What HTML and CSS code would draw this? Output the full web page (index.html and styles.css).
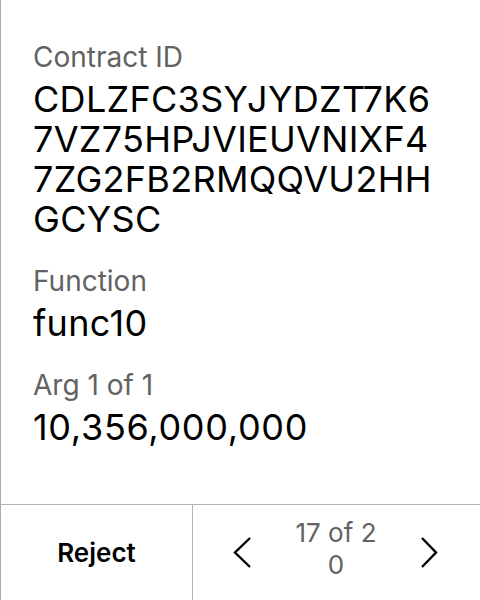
FILE: index.html
```html
<!DOCTYPE html>
<html>
<head>
<meta charset="utf-8">
<link rel="stylesheet" href="styles.css">
</head>
<body>
<div class="screen">
  <main class="content">
    <section class="field">
      <div class="label">Contract ID</div>
      <div class="value">CDLZFC3SYJYDZT7K6<br>7VZ75HPJVIEUVNIXF4<br>7ZG2FB2RMQQVU2HH<br>GCYSC</div>
    </section>
    <section class="field">
      <div class="label">Function</div>
      <div class="value">func10</div>
    </section>
    <section class="field">
      <div class="label">Arg 1 of 1</div>
      <div class="value num">10,356,000,000</div>
    </section>
  </main>
  <footer class="footer">
    <div class="reject">Reject</div>
    <div class="pager">
      <svg class="chev" width="20" height="34" viewBox="0 0 20 34"><path d="M17 2 L2 16.5 L17 31" fill="none" stroke="#000" stroke-width="2.4"/></svg>
      <div class="count">17 of 20</div>
      <svg class="chev" width="20" height="34" viewBox="0 0 20 34"><path d="M3 2 L17 16.5 L3 31" fill="none" stroke="#000" stroke-width="2.4"/></svg>
    </div>
  </footer>
</div>
</body>
</html>
```
FILE: styles.css
```css
* { box-sizing: border-box; }
html, body { margin: 0; padding: 0; background: #fff; }
body { font-family: Inter, "Noto Sans", sans-serif; color: #000; }
.screen {
  width: 480px;
  height: 600px;
  border-left: 1px solid #a8a8a8;
  display: flex;
  flex-direction: column;
}
.content {
  flex: 1;
  padding: 40px 20px 0 32px;
  display: flex;
  flex-direction: column;
  gap: 25px;
}
.field { display: flex; flex-direction: column; gap: 5px; }
.label { font-size: 28px; line-height: 34px; color: #626262; }
.value { font-size: 36px; line-height: 40px; color: #000; white-space: nowrap; letter-spacing: 0.3px; }
.num { letter-spacing: 0.7px; }
.footer {
  height: 96px;
  border-top: 1px solid #b4b4b4;
  display: flex;
}
.reject {
  width: 192px;
  border-right: 1px solid #b4b4b4;
  display: flex;
  align-items: center;
  justify-content: center;
  font-size: 26px;
  font-weight: 600;
}
.pager {
  flex: 1;
  display: flex;
  align-items: center;
  justify-content: space-between;
  padding: 0 41px 0 40px;
}
.chev { display: block; }
.count {
  width: 90px;
  margin-bottom: 7px;
  text-align: center;
  word-break: break-all;
  font-size: 26px;
  line-height: 32px;
  color: #626262;
}
```
